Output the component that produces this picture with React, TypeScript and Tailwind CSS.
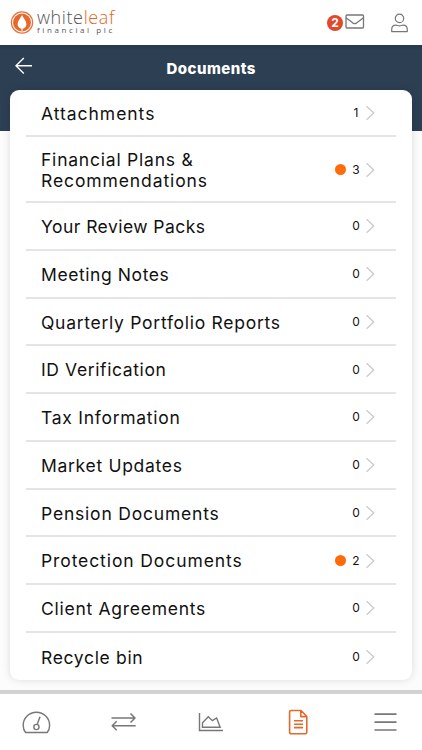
type Row = { lines: { text: string; track: string }[]; count: number; unread?: boolean };

const rows: Row[] = [
  { lines: [{ text: "Attachments", track: "tracking-[0.97px]" }], count: 1 },
  {
    lines: [
      { text: "Financial Plans &", track: "tracking-[0.78px]" },
      { text: "Recommendations", track: "tracking-[0.9px]" },
    ],
    count: 3,
    unread: true,
  },
  { lines: [{ text: "Your Review Packs", track: "tracking-[0.45px]" }], count: 0 },
  { lines: [{ text: "Meeting Notes", track: "tracking-[0.58px]" }], count: 0 },
  { lines: [{ text: "Quarterly Portfolio Reports", track: "tracking-[0.72px]" }], count: 0 },
  { lines: [{ text: "ID Verification", track: "tracking-[0.62px]" }], count: 0 },
  { lines: [{ text: "Tax Information", track: "tracking-[0.73px]" }], count: 0 },
  { lines: [{ text: "Market Updates", track: "tracking-[0.7px]" }], count: 0 },
  { lines: [{ text: "Pension Documents", track: "tracking-[0.8px]" }], count: 0 },
  { lines: [{ text: "Protection Documents", track: "tracking-[0.9px]" }], count: 2, unread: true },
  { lines: [{ text: "Client Agreements", track: "tracking-[0.73px]" }], count: 0 },
  { lines: [{ text: "Recycle bin", track: "tracking-[0.67px]" }], count: 0 },
];

function Header() {
  return (
    <header className="flex h-[45px] shrink-0 items-start bg-white">
      <div className="flex pl-[10px] pt-[9px]">
        <svg width="24" height="25" viewBox="0 0 24 25" fill="none">
          <circle cx="12" cy="13.5" r="10.6" stroke="#e8743b" strokeWidth="1.2" />
          <circle cx="12" cy="13.5" r="9" fill="#e8682c" />
          <path d="M12 6C13.4 9 16.4 11.8 16.4 15.3C16.4 17.9 14.6 19.5 12.5 19.7V22H11.5V19.7C9.4 19.5 7.6 17.9 7.6 15.3C7.6 11.8 10.6 9 12 6Z" fill="white" />
        </svg>
        <div className="ml-[3px] font-['Open_Sans',sans-serif]">
          <div className="h-[17px] whitespace-nowrap text-[18px] font-light leading-[17px] tracking-[0.6px] text-[#555]">
            white<span className="text-[#ea6524]">leaf</span>
          </div>
          <div className="whitespace-nowrap text-[8px] leading-[8px] tracking-[2.6px] text-[#555]">financial plc</div>
        </div>
      </div>
      <div className="ml-auto flex pt-[13px]">
        <span className="mt-[2px] flex size-4 items-center justify-center rounded-full bg-[#e0492b] text-[12px] font-bold text-white">2</span>
        <svg className="ml-[2px]" width="20" height="16" viewBox="0 0 20 16" fill="none" stroke="#777" strokeWidth="1.3" strokeLinejoin="round">
          <rect x="1" y="2" width="17.5" height="13" rx="1" />
          <path d="M1 4.7L8 10.1Q9.75 11.3 11.5 10.1L18.5 4.7" />
        </svg>
        <svg className="ml-[25px] mr-[13px]" width="19" height="21" viewBox="0 0 19 21" fill="none" stroke="#777" strokeWidth="1.2">
          <circle cx="9.5" cy="5.4" r="4.2" />
          <path d="M1.7 18.6V16.5C1.7 13.8 3.3 12.2 6 12.2C7.5 12.2 8 12.8 9.5 12.8S11.5 12.2 13 12.2C15.7 12.2 17.3 13.8 17.3 16.5V18.6H1.7Z" strokeLinejoin="round" />
        </svg>
      </div>
    </header>
  );
}

function DocumentRow({ row }: { row: Row }) {
  const height = row.lines.length > 1 ? "h-[66px]" : "h-[47.75px]";
  return (
    <li className={`flex items-center border-b-2 border-[#e5e5e5] pl-[15px] pr-[20px] last:border-b-0 first:h-[47px] ${height}`}>
      <div className="pt-[2px] text-[17.5px] leading-[21.5px] text-[#111]">
        {row.lines.map((l) => (
          <span key={l.text} className={`block w-max ${l.track}`}>{l.text}</span>
        ))}
      </div>
      <div className="ml-auto flex items-center pt-px">
        {row.unread && <span className="mr-[6px] size-[11px] rounded-full bg-[#ff6a0b]" />}
        <span className="w-2 text-center text-[12px] leading-4 text-[#111]">{row.count}</span>
        <svg className="ml-[5px]" width="11" height="16" viewBox="0 0 11 16" fill="none" stroke="#c8c8c8" strokeWidth="1.2">
          <path d="M1.6 1.2L8.8 8L1.6 14.8" />
        </svg>
      </div>
    </li>
  );
}

function TabBar() {
  return (
    <nav className="flex h-[60px] shrink-0 items-start border-t-[4px] border-[#d2d2d2] bg-white text-[#777]">
      <svg className="ml-[22px] mt-[17px]" width="29" height="24" viewBox="0 0 29 24" fill="none" stroke="currentColor" strokeWidth="1.4">
        <path d="M3.6 21.5C2 19.5 1.2 17 1.2 14.4C1.2 7 7.1 1.2 14.4 1.2S27.6 7 27.6 14.4C27.6 17 26.8 19.5 25.2 21.5Z" strokeLinejoin="round" />
        <circle cx="14.4" cy="16" r="2.6" />
        <path d="M15.2 13.3L18 5.7" />
      </svg>
      <svg className="ml-[59px] mt-[17px]" width="28" height="22" viewBox="0 0 28 22" fill="none" stroke="currentColor" strokeWidth="1.5" strokeLinejoin="round">
        <path d="M1.5 7H25M20.5 2.5L25 7L20.5 11.5M25.7 14.8H2.2M6.7 10.3L2.2 14.8L6.7 19.3" />
      </svg>
      <svg className="ml-[60px] mt-[18px]" width="26" height="21" viewBox="0 0 26 21" fill="none" stroke="currentColor" strokeWidth="1.4">
        <path d="M1.5 1V18.5H25M4.5 15.3V10.8L10.3 4.7L14.4 8.7L18.6 6L22.2 15.3Z" />
      </svg>
      <svg className="ml-[64px] mt-[15px]" width="22" height="27" viewBox="0 0 22 27" fill="none" stroke="#e56a2a" strokeWidth="1.6" strokeLinejoin="round">
        <path d="M3.2 1.5H13L18.8 7.5V23.2Q18.8 24.8 17.2 24.8H3.2Q1.6 24.8 1.6 23.2V3.1Q1.6 1.5 3.2 1.5ZM12.8 1.8V7.6H18.6M6 11.8H15M6 15.2H15M6 18.6H15" />
      </svg>
      <svg className="ml-[63px] mt-[17px]" width="25" height="23" viewBox="0 0 25 23" fill="none" stroke="currentColor" strokeWidth="1.7">
        <path d="M1.5 3.2H23.5M1.5 11.2H23.5M1.5 19H23.5" />
      </svg>
    </nav>
  );
}

export default function App() {
  return (
    <div className="flex h-[750px] w-[422px] flex-col overflow-hidden bg-[#fcfcfc] font-['Inter',sans-serif]">
      <Header />
      <main className="flex-1 bg-[linear-gradient(#2d3f53_86px,#fcfcfc_86px)]">
        <div className="flex h-[45px] items-start bg-[linear-gradient(#26384c,#2d3f53_5px)]">
          <svg className="ml-[14px] mt-[12px]" width="20" height="18" viewBox="0 0 20 18" fill="none" stroke="white" strokeWidth="1.4">
            <path d="M18 8.8H2M9.8 1L2 8.8L9.8 16.6" />
          </svg>
          <h1 className="ml-[132.5px] mt-[14px] whitespace-nowrap text-[15px] font-extrabold leading-5 tracking-[0.45px] text-white">Documents</h1>
        </div>
        <ul className="ml-[10px] h-[590px] w-[402px] rounded-[9px] bg-white px-4 shadow-[0_0_9px_rgba(0,0,0,0.13)]">
          {rows.map((row) => (
            <DocumentRow key={row.lines[0].text} row={row} />
          ))}
        </ul>
      </main>
      <TabBar />
    </div>
  );
}
